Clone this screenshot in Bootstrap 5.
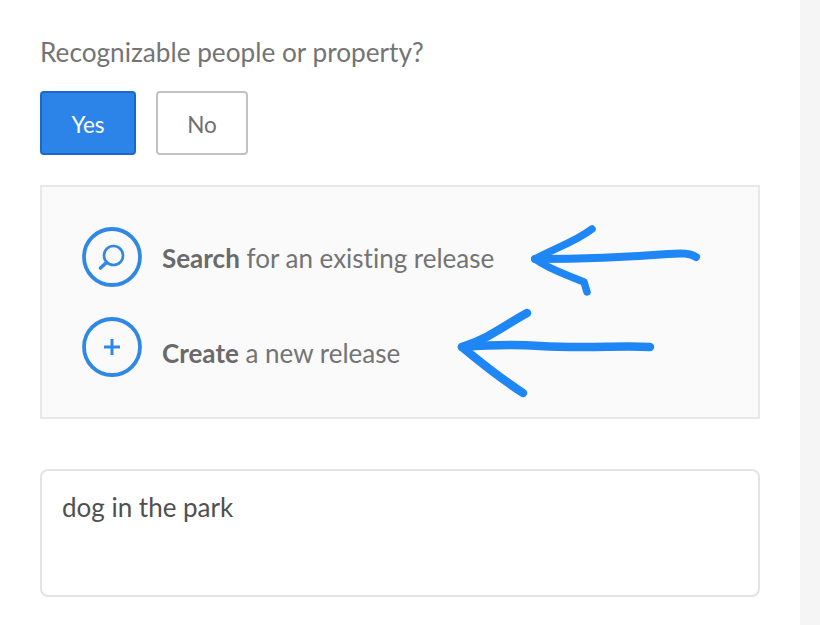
<!DOCTYPE html>
<html lang="en">
<head>
    <meta charset="UTF-8" />
    <meta name="viewport" content="width=device-width, initial-scale=1.0" />
    <title>Release</title>
    <link href="https://cdn.jsdelivr.net/npm/bootstrap@5.3.0/dist/css/bootstrap.min.css" rel="stylesheet" />
    <style>
        html, body { height: 100%; }
        body {
            background: #fff;
            font-family: "Lato", "Open Sans", sans-serif;
            font-variant-ligatures: none;
            color: #6e6e6e;
            overflow: hidden;
        }
        .page-wrap { height: 625px; }
        .main-col { width: 800px; padding: 36px 40px 0; flex: none; }
        .side-strip { flex: 1; background: #f5f5f5; }
        .field-label { font-size: 26.2px; line-height: 32px; margin-bottom: 23px; color: #747474; }
        .choice-btn {
            height: 64px;
            font-size: 22.5px;
            border-radius: 4px;
            border-width: 2px;
            padding: 4px 0 0;
        }
        .choice-yes { width: 96px; background: #2d84e8; border-color: #1a68c8; color: #fff; }
        .choice-no { width: 92px; background: #fff; border-color: #c2c2c2; color: #707070; }
        .release-panel {
            position: relative;
            height: 234px;
            margin-top: 30px;
            padding: 40px;
            background: #fafafa;
            border: 2px solid #e8e8e8;
        }
        .release-row { height: 60px; font-size: 26px; color: #747474; gap: 20px; }
        .release-row b { color: #6a6a6a; font-weight: 700; }
        .row-text-a { padding-top: 2px; }
        .row-text-b { padding-top: 12px; }
        .circle-icon { width: 60px; height: 60px; flex: none; }
        .scribble { position: absolute; left: -42px; top: -187px; width: 800px; height: 625px; pointer-events: none; }
        .note-box {
            display: block;
            height: 128px;
            margin-top: 50px;
            padding: 18px 20px;
            font-size: 26px;
            line-height: 36px;
            color: #505050;
            font-variant-ligatures: none;
            border: 2px solid #e3e3e3;
            border-radius: 8px;
            resize: none;
        }
    </style>
</head>
<body>
    <div class="page-wrap d-flex">
        <div class="main-col">
            <div class="field-label">Recognizable people or property?</div>
            <div class="d-flex" style="gap: 20px">
                <button type="button" class="btn choice-btn choice-yes">Yes</button>
                <button type="button" class="btn choice-btn choice-no">No</button>
            </div>

            <div class="release-panel d-flex flex-column" style="gap: 30px">
                <div class="release-row d-flex align-items-center">
                    <svg class="circle-icon" viewBox="0 0 60 60" fill="none" stroke="#2f88e6">
                        <circle cx="30" cy="30" r="28" stroke-width="3.8" />
                        <circle cx="31.5" cy="28.5" r="9.5" stroke-width="2.6" />
                        <path d="M24.5 35.5 L18.5 41" stroke-width="3.6" stroke-linecap="round" />
                    </svg>
                    <span class="row-text-a"><b>Search</b> for an existing release</span>
                </div>
                <div class="release-row d-flex align-items-center">
                    <svg class="circle-icon" viewBox="0 0 60 60" fill="none" stroke="#2f88e6">
                        <circle cx="30" cy="30" r="28" stroke-width="3.8" />
                        <path d="M30 22 V38 M22 30 H38" stroke-width="3" />
                    </svg>
                    <span class="row-text-b"><b>Create</b> a new release</span>
                </div>
                <svg class="scribble" viewBox="0 0 800 625" fill="none" stroke="#1e86f5" stroke-linecap="round" stroke-linejoin="round">
                    <path d="M696 257 C690 253 682 253 668 254 C630 257 580 259 535 259" stroke-width="8" />
                    <path d="M592 229 C575 242 555 248 535 259 C550 270 568 275 584 282 L587 292" stroke-width="7.5" />
                    <path d="M650 347 C620 345 590 349 540 346 C510 344 490 345 462 347" stroke-width="8.5" />
                    <path d="M527 313 C505 325 490 338 462 347 C480 362 500 378 523 393" stroke-width="8.5" />
                </svg>
            </div>

            <textarea class="form-control note-box" rows="2">dog in the park</textarea>
        </div>
        <div class="side-strip"></div>
    </div>
    <script src="https://cdn.jsdelivr.net/npm/bootstrap@5.3.0/dist/js/bootstrap.bundle.min.js"></script>
</body>
</html>
